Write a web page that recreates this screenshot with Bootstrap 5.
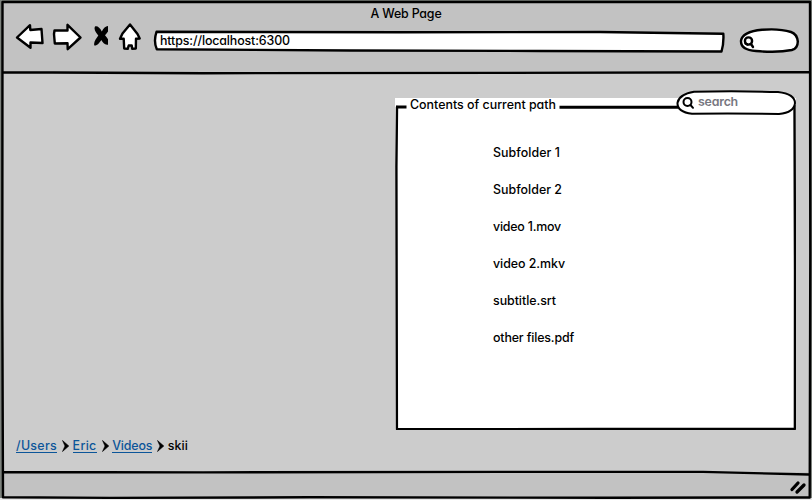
<!DOCTYPE html>
<html lang="en">
<head>
<meta charset="utf-8">
<meta name="viewport" content="width=device-width, initial-scale=1">
<title>A Web Page</title>
<link href="https://cdn.jsdelivr.net/npm/bootstrap@5.3.0/dist/css/bootstrap.min.css" rel="stylesheet">
<style>
body{width:812px;height:500px;font-family:Inter,"Liberation Sans",sans-serif;font-feature-settings:"cv11";font-size:12.4px;font-weight:500;line-height:18px;color:#000;background:#ccc}
svg{display:block;flex:none}
.ink{fill:none;stroke:#000;stroke-width:2.4;stroke-linecap:round;stroke-linejoin:round}
.paper{fill:#fff}
.chrome{height:73px;background:#c2c2c2}
.chrome-title{height:20px;padding-top:5px}
.toolbar{height:36px;padding-left:14px}
.sketch{inset:0;pointer-events:none}
.address span{left:8px;top:12px}
.search-box{margin-left:12px}
.stage{height:399px;padding:25px 16px 0 0}
.crumbs{padding:0 0 19px 16px;line-height:15px}
.crumbs a{color:#0b5599;text-decoration:none;border-bottom:1px solid #0b5599;height:15px}
.crumbs svg{margin:0 4px 0 4px}
.crumbs svg+a,.crumbs svg+span{margin-left:-.4px}
.panel{width:401px;height:332px;background:#fff}
.panel-head{height:35px;padding-left:15px;line-height:13px}
.panel-search{width:122px;height:26px;left:280px;top:-8px}
.panel-search span{left:23px;top:3px;color:#777780;font-weight:600}
.files{padding-left:98px}
.files li{height:37px;padding-top:11px}
.status{height:28px;background:#c2c2c2}
</style>
</head>
<body class="position-relative overflow-hidden d-flex flex-column">
<header class="chrome">
  <div class="chrome-title text-center"><span data-w="71">A Web Page</span></div>
  <div class="toolbar d-flex">
    <svg width="32" height="36" viewBox="14 20 32 36"><path class="ink paper" d="M17 37.500 30 25.200l.3 4.800L41.500 29l1 14-12-.5V47.800Z"/></svg>
    <svg class="ms-1" width="34" height="36" viewBox="50 20 34 36"><path class="ink paper" d="M80.500 37.500 67.500 24.800v5.700L54.500 30.500 54 34l.8 9.500 12.700-.3.200 6Z"/></svg>
    <svg width="24" height="36" viewBox="84 20 24 36"><path d="M95 26.500c2-1 5 1 6.800 5 2-4 5-6.500 7.700-5 .8 3-2.300 6-4.500 8.700 2.500 3 5 6 3.500 9.300-3.500 1.200-5.500-2-7.200-4.500-1.600 2.500-4.200 6-7 5.500-1-4 2.200-7 4-10-2.300-3-4.800-6-3.300-9Z"/></svg>
    <svg width="36" height="36" viewBox="108 20 36 36"><path class="ink paper" d="M130 24.500 137.500 34l2.200 4.500-3.700.2-.2 9.800-3.600.3-.5-3.300h-3l-1 3.300-3.500-.3-.5-9.800-3.700.1 2.500-5.300Z"/></svg>
    <div class="address position-relative ms-2">
      <svg width="574" height="36" viewBox="152 20 574 36"><path class="ink paper" d="M156.500 31.800 400 32.200 600 32l123.300 1.700q.7 9-1.800 17.800L540 51 350 50.500 156.800 49.200q-3.500-8-.3-17.400Z"/></svg>
      <span class="position-absolute" data-w="130">https://localhost:6300</span>
    </div>
    <svg width="62" height="36" viewBox="738 20 62 36" class="search-box"><path class="ink paper" d="M762 29.800q17-1.600 29 2.200 6 2 6.800 9.500 0 7-6 8.500-14 3-35.800 1-15.500-1-15-10.300 1.500-9 21-10.900Z"/><g class="ink"><circle cx="748.500" cy="41" r="3.600"/><path d="M745.500 43.500l2 1M751 44l2 3"/></g></svg>
  </div>
</header>

<main class="stage d-flex justify-content-between">
  <nav class="crumbs d-flex align-items-center align-self-end" aria-label="breadcrumb">
    <a href="#" data-w="41">/Users</a>
    <svg width="8" height="14" viewBox="0 0 8 14"><path d="M1.500 1.500 7.800 7l-6.300 5.500L4 7Z" stroke="#000" stroke-width=".6"/></svg>
    <a href="#" data-w="24">Eric</a>
    <svg width="8" height="14" viewBox="0 0 8 14"><path d="M1.500 1.500 7.800 7l-6.300 5.500L4 7Z" stroke="#000" stroke-width=".6"/></svg>
    <a href="#" data-w="40">Videos</a>
    <svg width="8" height="14" viewBox="0 0 8 14"><path d="M1.500 1.500 7.800 7l-6.300 5.500L4 7Z" stroke="#000" stroke-width=".6"/></svg>
    <span data-w="20">skii</span>
  </nav>
  <section class="panel position-relative">
    <svg class="sketch position-absolute" width="401" height="332" viewBox="395 98 401 332"><path class="ink" d="M397 107l-.6 60 .5 262.300 200-.3 198-.1.100-160-.5-163"/><path d="M396 107h10.500M559.500 107.300H678" fill="none" stroke="#000" stroke-width="3"/></svg>
    <div class="panel-head"><span data-w="146">Contents of current path</span></div>
    <ul class="files list-unstyled mb-0">
      <li><span data-w="67">Subfolder 1</span></li>
      <li><span data-w="69">Subfolder 2</span></li>
      <li><span data-w="68">video 1.mov</span></li>
      <li><span data-w="72">video 2.mkv</span></li>
      <li><span data-w="63">subtitle.srt</span></li>
      <li><span data-w="81">other files.pdf</span></li>
    </ul>
    <div class="panel-search position-absolute">
      <svg width="122" height="26" viewBox="675 90 122 26"><path class="ink paper" style="stroke-width:2" d="M694 91.800q40-1 84 .2 17 2 17 11.200-1 9.500-16 10.800-45-.7-87-.2-15-2-14.500-11 1.500-8.500 16.500-11Z"/><g class="ink" style="stroke-width:2"><circle cx="687.500" cy="102" r="4"/><path d="M690.500 105l2.500 2.800"/></g></svg>
      <span class="position-absolute" data-w="40">search</span>
    </div>
  </section>
</main>

<footer class="status"></footer>

<svg class="sketch position-absolute" width="812" height="500" viewBox="0 0 812 500">
  <path d="M0 0h812v2H0zM0 0h2v500H0zM811 0h1v500h-1z" fill="#7d827d"/>
  <path d="M0 498h812v2H0z" fill="#e8e8e8"/>
  <path class="ink" d="M2.500 2h807.500l.3 250-.6 245.500-200 .3-300-.5-200 .6L3 497.200 2.300 300ZM3 72.300l200 .9 300-.3 306-.8M3 472l200 .4 300-.5h200L809 474.500"/>
  <path d="M792 489.500l6-6.500M797 492l7-7" fill="none" stroke="#000" stroke-width="3.300" stroke-linecap="round"/>
</svg>
<script src="https://cdn.jsdelivr.net/npm/bootstrap@5.3.0/dist/js/bootstrap.bundle.min.js"></script>
<script>
// Tune tracking so each label keeps its intended width
document.querySelectorAll('[data-w]').forEach(function(el){
  var extra = el.dataset.w - el.getBoundingClientRect().width;
  el.style.letterSpacing = (extra / el.textContent.length) + 'px';
});
</script>
</body>
</html>
